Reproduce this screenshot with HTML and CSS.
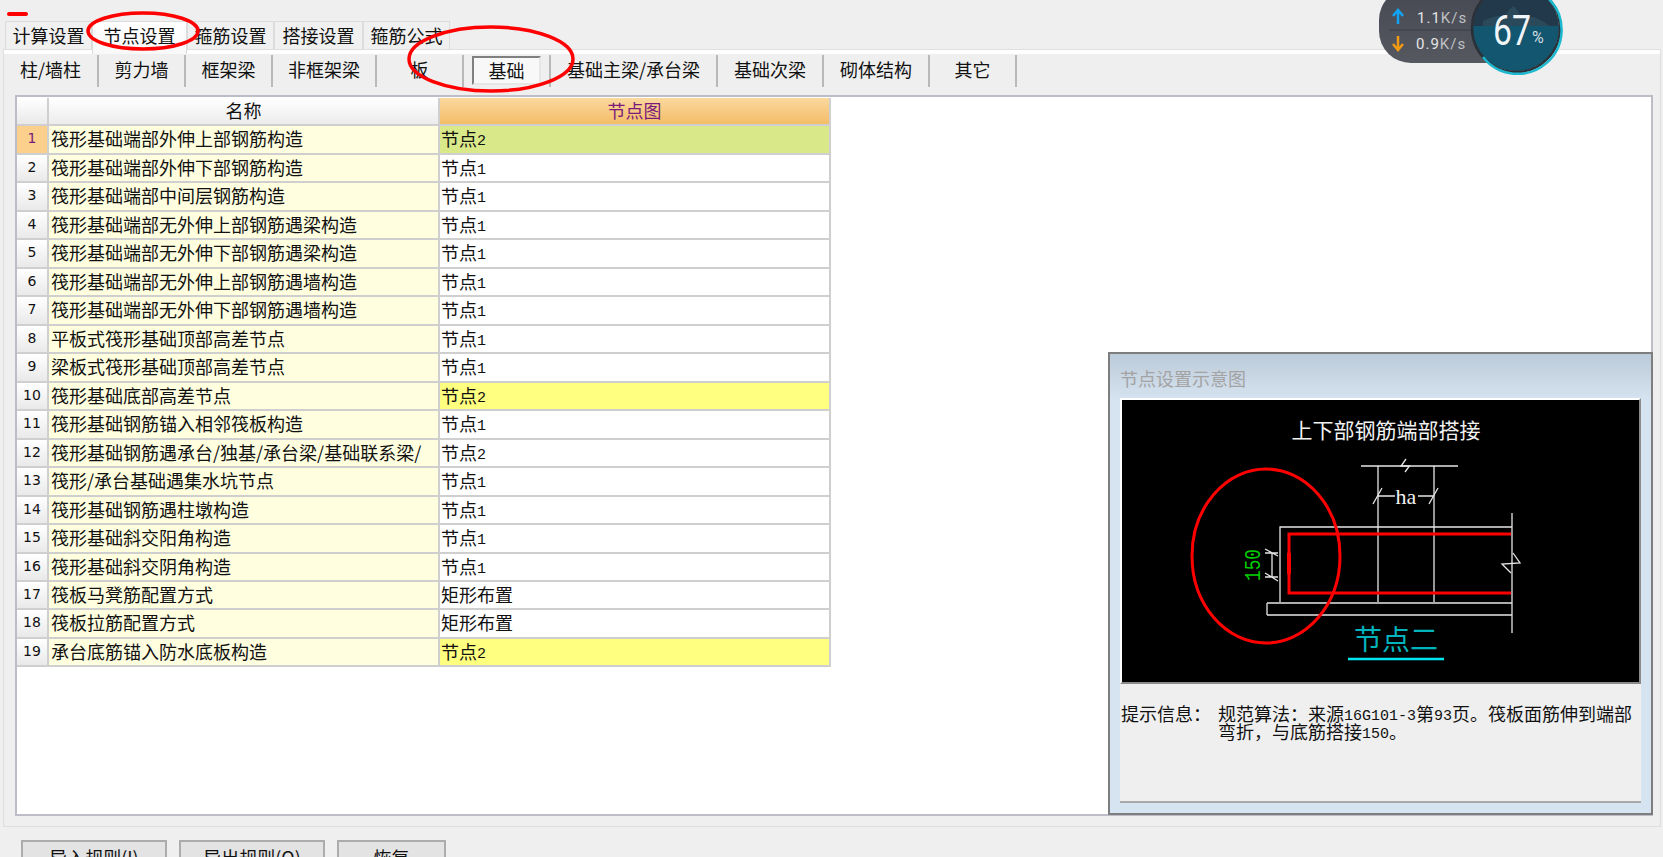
FILE: index.html
```html
<!DOCTYPE html>
<html lang="zh-CN">
<head>
  <meta charset="UTF-8" />
  <title>节点设置</title>
  <link rel="stylesheet" href="styles.css">
</head>
<body>

<div class="tabs">
  <div class="tab tab-a">计算设置</div>
  <div class="tab tab-b active">节点设置</div>
  <div class="tab tab-a">箍筋设置</div>
  <div class="tab tab-c">搭接设置</div>
  <div class="tab tab-a">箍筋公式</div>
</div>

<div class="panel">
  <div class="toolbar">
    <div class="tool first">柱/墙柱</div>
    <div class="tool">剪力墙</div>
    <div class="tool">框架梁</div>
    <div class="tool">非框架梁</div>
    <div class="tool">板</div>
    <div class="tool tool-pressed"><span class="pressed">基础</span></div>
    <div class="tool tool-wide">基础主梁/承台梁</div>
    <div class="tool tool-wide">基础次梁</div>
    <div class="tool tool-wide">砌体结构</div>
    <div class="tool">其它</div>
  </div>

  <div class="grid-box">
    <div class="row head">
      <div class="no"></div>
      <div class="name">名称</div>
      <div class="node">节点图</div>
    </div>
    <div class="row current"><div class="no">1</div><div class="name">筏形基础端部外伸上部钢筋构造</div><div class="node">节点<span class="dg">2</span></div></div>
    <div class="row"><div class="no">2</div><div class="name">筏形基础端部外伸下部钢筋构造</div><div class="node">节点<span class="dg">1</span></div></div>
    <div class="row"><div class="no">3</div><div class="name">筏形基础端部中间层钢筋构造</div><div class="node">节点<span class="dg">1</span></div></div>
    <div class="row"><div class="no">4</div><div class="name">筏形基础端部无外伸上部钢筋遇梁构造</div><div class="node">节点<span class="dg">1</span></div></div>
    <div class="row"><div class="no">5</div><div class="name">筏形基础端部无外伸下部钢筋遇梁构造</div><div class="node">节点<span class="dg">1</span></div></div>
    <div class="row"><div class="no">6</div><div class="name">筏形基础端部无外伸上部钢筋遇墙构造</div><div class="node">节点<span class="dg">1</span></div></div>
    <div class="row"><div class="no">7</div><div class="name">筏形基础端部无外伸下部钢筋遇墙构造</div><div class="node">节点<span class="dg">1</span></div></div>
    <div class="row"><div class="no">8</div><div class="name">平板式筏形基础顶部高差节点</div><div class="node">节点<span class="dg">1</span></div></div>
    <div class="row"><div class="no">9</div><div class="name">梁板式筏形基础顶部高差节点</div><div class="node">节点<span class="dg">1</span></div></div>
    <div class="row changed"><div class="no">10</div><div class="name">筏形基础底部高差节点</div><div class="node">节点<span class="dg">2</span></div></div>
    <div class="row"><div class="no">11</div><div class="name">筏形基础钢筋锚入相邻筏板构造</div><div class="node">节点<span class="dg">1</span></div></div>
    <div class="row"><div class="no">12</div><div class="name">筏形基础钢筋遇承台/独基/承台梁/基础联系梁/</div><div class="node">节点<span class="dg">2</span></div></div>
    <div class="row"><div class="no">13</div><div class="name">筏形/承台基础遇集水坑节点</div><div class="node">节点<span class="dg">1</span></div></div>
    <div class="row"><div class="no">14</div><div class="name">筏形基础钢筋遇柱墩构造</div><div class="node">节点<span class="dg">1</span></div></div>
    <div class="row"><div class="no">15</div><div class="name">筏形基础斜交阳角构造</div><div class="node">节点<span class="dg">1</span></div></div>
    <div class="row"><div class="no">16</div><div class="name">筏形基础斜交阴角构造</div><div class="node">节点<span class="dg">1</span></div></div>
    <div class="row"><div class="no">17</div><div class="name">筏板马凳筋配置方式</div><div class="node">矩形布置</div></div>
    <div class="row"><div class="no">18</div><div class="name">筏板拉筋配置方式</div><div class="node">矩形布置</div></div>
    <div class="row changed"><div class="no">19</div><div class="name">承台底筋锚入防水底板构造</div><div class="node">节点<span class="dg">2</span></div></div>

    <div class="preview">
      <div class="preview-title">节点设置示意图</div>
      <div class="drawing">
        <svg width="517" height="282" viewBox="0 0 517 282">
          <text class="d-title" x="264" y="38" text-anchor="middle">上下部钢筋端部搭接</text>
          <g class="d-line">
            <path d="M239 66H336M256 66V202M312 66V202"/>
            <path d="M284 59L279 66H287.5L283 72"/>
            <path d="M256 96H273M296 96H312M251 104L260 88M307 104L316 88"/>
            <path d="M158 202V127H390M390 113V233"/>
            <path d="M145 203H390M145 215H390M145 203V215"/>
            <path d="M150 153V177M143 149L156 156M143 173L156 181M143 153H156M143 177H156"/>
            <path d="M391 153L398 163L380 164L389 173"/>
          </g>
          <text class="d-ha" x="284" y="104" text-anchor="middle">ha</text>
          <path class="d-bar" d="M389 134H167V193H389"/>
          <path class="d-bar d-bar-thick" d="M167 153V174"/>
          <text class="d-size" transform="translate(138 165) rotate(-90)" text-anchor="middle" textLength="32" lengthAdjust="spacingAndGlyphs">150</text>
          <ellipse class="d-ring" cx="144" cy="156" rx="74" ry="87"/>
          <text class="d-node" x="274" y="250" text-anchor="middle">节点二</text>
          <path class="d-under" d="M226 259H322"/>
        </svg>
      </div>
      <div class="info">
        <div class="info-label">提示信息：</div>
        <div class="info-text">规范算法：来源<span class="dg">16G101-3</span>第<span class="dg">93</span>页。筏板面筋伸到端部弯折，与底筋搭接<span class="dg">150</span>。</div>
      </div>
    </div>
  </div>
</div>

<div class="actions">
  <button class="btn btn-wide">导入规则(I)</button>
  <button class="btn btn-wide">导出规则(O)</button>
  <button class="btn">恢复</button>
</div>

<!-- red marks drawn over the screenshot -->
<svg class="marks" width="600" height="100" viewBox="0 0 600 100">
  <path class="mark" d="M9 14H26"/>
  <ellipse class="mark-ring" cx="143" cy="31" rx="55" ry="18"/>
  <ellipse class="mark-ring" cx="491" cy="59" rx="82" ry="32"/>
</svg>

<!-- network speed widget -->
<svg class="speed" width="190" height="80" viewBox="0 0 190 80">
  <defs>
    <linearGradient id="pill" x1="0" y1="0" x2="0" y2="1">
      <stop offset="0" stop-color="#464953"/>
      <stop offset="1" stop-color="#55585f"/>
    </linearGradient>
    <clipPath id="disc"><circle cx="137" cy="28" r="43"/></clipPath>
  </defs>
  <rect x="0" y="-12" width="150" height="75" rx="32" fill="url(#pill)"/>
  <path d="M10 30H95" stroke="#3d3f48"/>
  <path d="M19 24V11M14 16L19 10L24 16" fill="none" stroke="#12a4f4" stroke-width="2.5"/>
  <path d="M19 36V49M14 44L19 50L24 44" fill="none" stroke="#f39a12" stroke-width="2.5"/>
  <text class="speed-text" x="38" y="23">1.1<tspan class="speed-unit">K/s</tspan></text>
  <text class="speed-text" x="37" y="49">0.9<tspan class="speed-unit">K/s</tspan></text>
  <g clip-path="url(#disc)">
    <rect x="90" y="-20" width="100" height="100" fill="#22384b"/>
    <path d="M104 21Q118 14 126 17Q130 8 135 6Q140 12 142 17Q158 14 170 26H104Z" fill="#2a4a5b"/>
    <rect x="90" y="26" width="100" height="60" fill="#12566f"/>
  </g>
  <circle cx="137" cy="28" r="44" fill="none" stroke="#2b3138" stroke-width="2.5"/>
  <path d="M170 -1A44 44 0 1 1 104 57" fill="none" stroke="#1cb8cf" stroke-width="2.5"/>
  <text class="speed-pct" x="114" y="45" textLength="38" lengthAdjust="spacingAndGlyphs">67</text>
  <text class="speed-sign" x="153" y="43">%</text>
</svg>

</body>
</html>
```

FILE: styles.css
```css
html, body {
  margin: 0;
  padding: 0;
  height: 857px;
  overflow: hidden;
}
body {
  position: relative;
  background: #efefef;
  color: #111;
  font-family: "Noto Sans CJK SC", "Liberation Sans", sans-serif;
  font-size: 18px;
}
.dg {
  font-family: "Liberation Mono", monospace;
  font-size: 15px;
  line-height: 0;
  vertical-align: 1px;
}

/* tabs */
.tabs {
  display: flex;
  height: 28px;
  padding: 21px 0 0 5px;
}
.tab {
  box-sizing: border-box;
  text-align: center;
  line-height: 26px;
  background: #f0f0f0;
  border: 1px solid #dcdcdc;
  border-bottom: none;
}
.tab-a { width: 87px; }
.tab-b { width: 95px; }
.tab-c { width: 89px; }
.tab.active {
  position: relative;
  z-index: 1;
  height: 33px;
  background: linear-gradient(#fff, #f8f8f8);
}

/* main panel */
.panel {
  box-sizing: border-box;
  height: 778px;
  margin: 0 2px 0 3px;
  padding-top: 4px;
  background: #efefef;
  border: 1px solid #dedede;
  box-shadow: inset 0 4px 0 #fff;
}
.toolbar {
  display: flex;
  height: 32px;
  margin-top: 1px;
}
.tool {
  box-sizing: border-box;
  display: flex;
  align-items: center;
  justify-content: center;
  min-width: 87px;
  padding: 0 15px 5px;
  border-right: 2px solid #b9b9b9;
}
.tool.first { min-width: 95px; }
.tool.tool-wide { padding: 0 16px 5px; }
.tool.tool-pressed {
  padding: 0 0 2px;
}
.pressed {
  box-sizing: border-box;
  display: block;
  width: 69px;
  height: 29px;
  line-height: 24px;
  text-align: center;
  flex: none;
  background: #f8f8f8;
  border: 2px solid;
  border-color: #808080 #e6e6e6 #e6e6e6 #808080;
}

/* grid */
.grid-box {
  box-sizing: border-box;
  position: relative;
  height: 721px;
  margin: 8px 7px 0 11px;
  padding: 1px 0 0 0;
  background: #fff;
  border: 2px solid #bdbdc8;
}
.row {
  display: grid;
  grid-template-columns: 32px 391px 391px;
  width: 814px;
  height: 28.47px;
}
.row > div {
  box-sizing: border-box;
  border-right: 2px solid #cfcfcf;
  border-bottom: 2px solid #cfcfcf;
  line-height: 25px;
  white-space: nowrap;
  overflow: hidden;
}
.row .no {
  text-align: center;
  font-family: "DejaVu Sans", sans-serif;
  font-size: 14px;
  background: linear-gradient(#fff, #e9e9e9);
}
.row .name {
  padding-left: 2px;
  background: #ffffe0;
}
.row .node {
  padding-left: 1px;
  background: #fff;
}
.row.changed .node { background: #ffff80; }
.row.current .no {
  background: #fbcf8c;
  color: #7b1a7b;
}
.row.current .node { background: #d9e98a; }
.row.head > div { text-align: center; }
.row.head .name { background: linear-gradient(#fff, #ececec); padding: 0; }
.row.head .node {
  background: linear-gradient(#fbd89e, #f3bd67);
  color: #7b1a7b;
  padding: 0;
}

/* preview window, floats over the grid */
.preview {
  box-sizing: border-box;
  position: absolute;
  right: -2px;
  bottom: -1px;
  display: flex;
  flex-direction: column;
  width: 545px;
  height: 463px;
  padding: 0 10px 10px;
  background: linear-gradient(#bccbd9, #d6e3f1 46px);
  border: 2px solid #7e7e7e;
}
.preview-title {
  height: 44px;
  line-height: 49px;
  color: #a3a3a3;
}
.drawing {
  flex: none;
  height: 282px;
  background: #000;
  border: 2px solid;
  border-color: #fff #8a8a8a #8a8a8a #fff;
}
.drawing svg { display: block; }
.d-line {
  fill: none;
  stroke: #e6e6e6;
  stroke-width: 1.3;
}
.d-bar {
  fill: none;
  stroke: #f00;
  stroke-width: 3;
}
.d-bar-thick { stroke-width: 4; }
.d-ring {
  fill: none;
  stroke: #f00;
  stroke-width: 3;
}
.d-title {
  fill: #f2f2f2;
  font-size: 21px;
}
.d-ha {
  fill: #f2f2f2;
  font-family: "Liberation Serif", serif;
  font-size: 22px;
}
.d-size {
  fill: #00d000;
  font-family: "Liberation Mono", monospace;
  font-size: 22px;
}
.d-node {
  fill: #00b4be;
  font-size: 28px;
}
.d-under {
  fill: none;
  stroke: #00e6f0;
  stroke-width: 2.5;
}
.info {
  flex: 1;
  display: flex;
  padding: 20px 6px 0 1px;
  background: #efefef;
  border-bottom: 2px solid #a8a8a8;
  line-height: 18px;
}
.info-label {
  flex: none;
  width: 97px;
}
.info-text {
  width: 416px;
}

/* buttons under the panel, cut off by the window */
.actions {
  display: flex;
  gap: 12px;
  padding: 13px 0 0 21px;
}
.btn {
  box-sizing: border-box;
  width: 109px;
  height: 32px;
  padding: 0;
  font: inherit;
  color: inherit;
  background: #e3e3e3;
  border: 2px solid #acacac;
  border-bottom: none;
}
.btn-wide { width: 146px; }

/* overlays */
.marks {
  position: absolute;
  top: 0;
  left: 0;
  z-index: 2;
}
.mark {
  fill: none;
  stroke: #f00;
  stroke-width: 4;
  stroke-linecap: round;
}
.mark-ring {
  fill: none;
  stroke: #f00;
  stroke-width: 3.5;
}
.speed {
  position: absolute;
  top: 0;
  left: 1379px;
  z-index: 2;
}
.speed-text {
  fill: #e4e4e6;
  font-family: "Roboto", sans-serif;
  font-size: 15px;
  letter-spacing: 1px;
}
.speed-unit { fill: #bfc0c4; }
.speed-pct {
  fill: #f2f5f7;
  font-family: "Roboto", sans-serif;
  font-size: 42px;
}
.speed-sign {
  fill: #d5dde2;
  font-family: "Roboto", sans-serif;
  font-size: 16px;
}
```
